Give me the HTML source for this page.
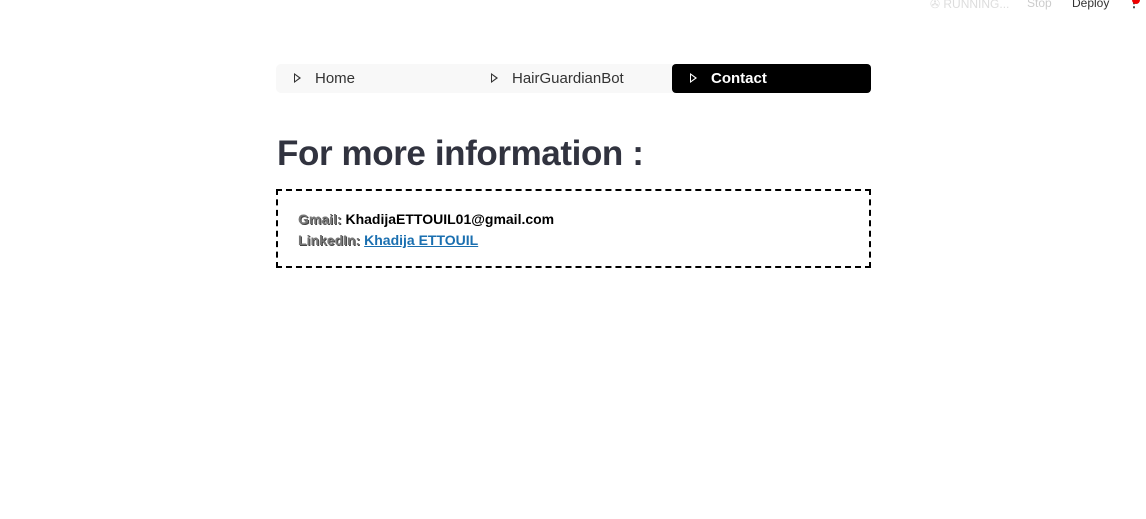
<!DOCTYPE html>
<html><head><meta charset="utf-8"><style>
body{margin:0;width:1146px;height:519px;background:#fff;font-family:"Liberation Sans",sans-serif;position:relative;overflow:hidden}
.top{position:absolute;top:-4px;font-size:12px;color:#ccc}
.nav{position:absolute;left:276px;top:64px;width:595px;height:29px;background:#f8f8f8;border-radius:5px}
.tab{position:absolute;top:0;height:29px;line-height:29px;font-size:15px;color:#333}
.tri{display:inline-block;width:0;height:0;border-left:7px solid #333;border-top:5px solid transparent;border-bottom:5px solid transparent;position:relative;margin-right:14px;vertical-align:middle;top:-1px}
.tri:after{content:"";position:absolute;left:-6px;top:-3px;border-left:4px solid #f8f8f8;border-top:3px solid transparent;border-bottom:3px solid transparent}
.tri.w{border-left-color:#fff}
.tri.w:after{border-left-color:#000}
.act{position:absolute;left:396px;top:0;width:199px;height:29px;background:#000;border-radius:4px}
h1{position:absolute;left:277px;top:134px;margin:0;font-size:35px;font-weight:bold;color:#31333f;font-family:"Liberation Sans",sans-serif;letter-spacing:-0.4px}
.box{position:absolute;left:276px;top:189px;width:591px;height:75px;border:2px dashed #000}
.l{position:absolute;left:20px;font-size:14px;font-weight:bold}
.g{color:#777;text-shadow:1px 1px 0 #444}
a{color:#1a6fb0;text-decoration:underline}
</style></head><body>
<div class="top" style="left:930px;top:-3px;color:#ddd">✇ RUNNING...</div>
<div class="top" style="left:1027px">Stop</div>
<div class="top" style="left:1072px;color:#333">Deploy</div>
<div class="top" style="left:1128px;color:#333;font-weight:bold">⋮</div>
<div style="position:absolute;left:1132px;top:-4px;width:8px;height:8px;border-radius:50%;background:#e00"></div>
<div class="nav">
 <div class="tab" style="left:18px"><span class="tri"></span>Home</div>
 <div class="tab" style="left:215px"><span class="tri"></span>HairGuardianBot</div>
 <div class="act"><div class="tab" style="left:18px;color:#fff;font-weight:bold"><span class="tri w"></span>Contact</div></div>
</div>
<h1>For more information :</h1>
<div class="box">
 <div class="l" style="top:20px"><span class="g">Gmail:</span> KhadijaETTOUIL01@gmail.com</div>
 <div class="l" style="top:41px"><span class="g">LinkedIn:</span> <a>Khadija ETTOUIL</a></div>
</div>
</body></html>
